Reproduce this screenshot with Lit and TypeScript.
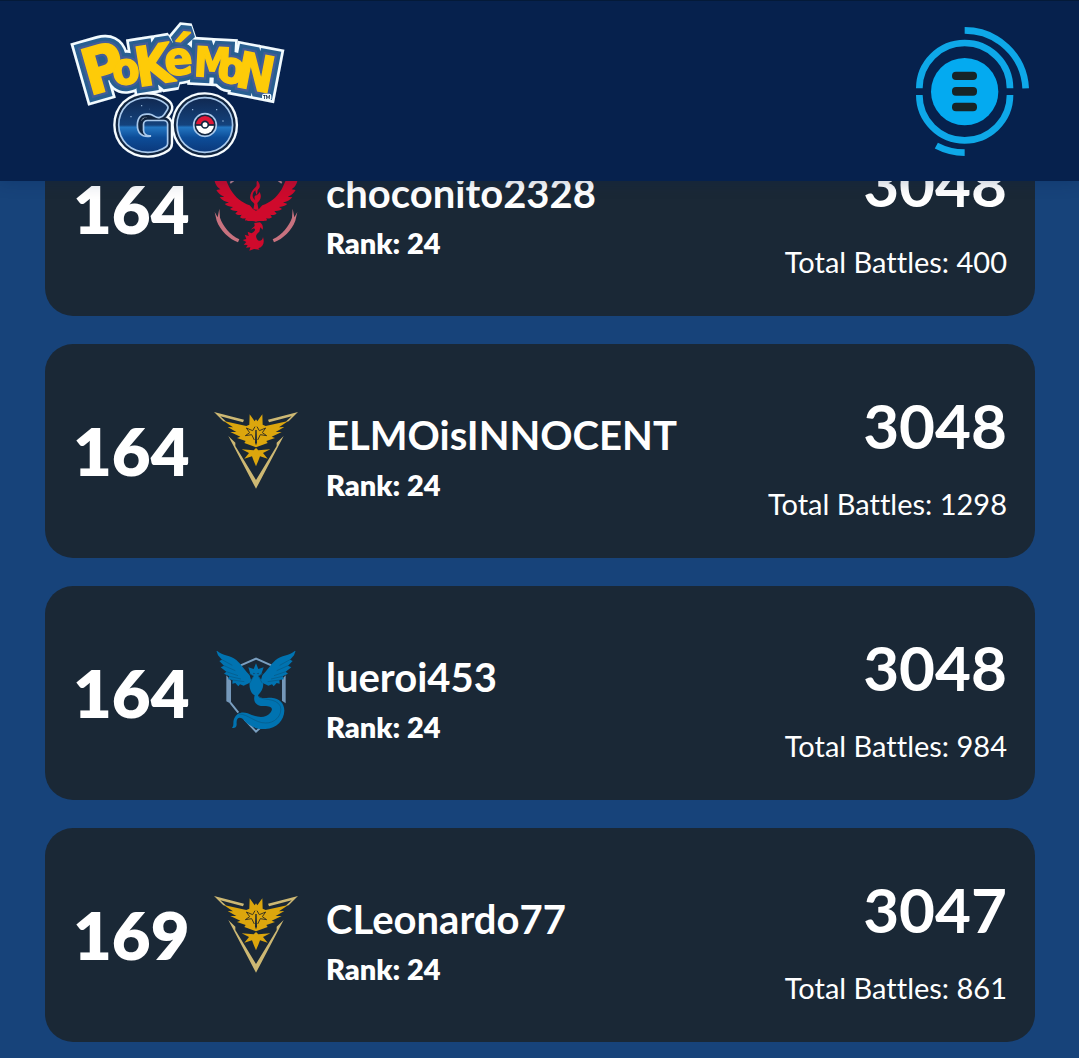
import { LitElement, html, svg, css } from "lit";
import { customElement, property, state } from "lit/decorators.js";

type Team = "valor" | "instinct" | "mystic";

interface Entry {
  place: number;
  team: Team;
  name: string;
  rank: number;
  score: number;
  battles: number;
}

const ENTRIES: Entry[] = [
  { place: 164, team: "valor", name: "choconito2328", rank: 24, score: 3048, battles: 400 },
  { place: 164, team: "instinct", name: "ELMOisINNOCENT", rank: 24, score: 3048, battles: 1298 },
  { place: 164, team: "mystic", name: "lueroi453", rank: 24, score: 3048, battles: 984 },
  { place: 169, team: "instinct", name: "CLeonardo77", rank: 24, score: 3047, battles: 861 },
];

/* One half of each emblem is drawn and mirrored about x = 153. */
const mirror = "translate(306 0) scale(-1 1)";

const valorHalf = svg`
  <path fill="#cf0a2c" d="M27 -6 C32 10 38 20 46 32 L28 30 C32 46 38 52 46 58 L34 60 C40 70 46 76 58 80 L44 82 C52 91 60 96 72 97 L59 102 C68 109 76 111 84 111 L75 117 C84 123 92 123 98 123 L91 131 C98 136 104 135 110 134 L105 142 C112 147 118 146 122 144 L120 151 C128 155 140 151 153 155 L153 122 C144 120 140 112 134 106 C110 98 92 84 76 58 C64 34 58 20 54 -2 Z"/>
  <path fill="#c8727f" d="M43 116 L45 143 C54 168 74 194 103 208 L99 217 C72 206 46 182 35 152 L29 126 L38 142 Z"/>
  <path fill="#b9818e" d="M74 36 L84 29 L88 33 L77 41 Z"/>`;

const instinctHalf = svg`
  <path fill="#cdb873" d="M27 36 L117 59 L114 67 L46 49 L64 65 L55 64 Z M70 108 L91 128 L91 138 L153 240 L153 266 Z"/>
  <path fill="#dca60d" d="M56 63 L124 78 L133 74 L134 43 L149 64 L153 58 L153 142 L118 129 L122 123 L96 114 L106 110 L76 96 L94 96 L68 81 L84 82 Z M153 144 L146 151 L110 148 L132 159 L118 176 L141 169 L146 182 L153 199 Z"/>
  <path fill="none" stroke="#3c3520" stroke-width="3" d="M150 80 L143 92 L124 84 L134 98 L121 107 L140 104 L148 120"/>`;

const mysticWing = svg`
  <path fill="#0073b1" d="M33 29 C48 48 76 44 94 60 C111 75 119 91 134 106 L140 127 C129 130 124 134 116 137 L105 133 L100 139 L91 129 L82 131 L83 120 L69 118 L73 109 L57 101 L64 95 L47 82 L57 77 L43 63 L51 59 L39 46 Z"/>
  <path fill="none" stroke="#085783" stroke-width="2" d="M51 59 L82 76 M57 77 L91 92 M64 95 L99 107 M73 109 L108 117 M83 120 L118 125"/>`;

const emblems = {
  valor: svg`
    <svg class="emblem" viewBox="27 -9 252 252" role="img" aria-label="Team Valor">
      ${valorHalf}<g transform=${mirror}>${valorHalf}</g>
      <path fill="#cf0a2c" d="M157 31 C151 42 160 45 149 54 C140 63 133 76 136 87 C138 95 146 96 148 102 L145 118 L161 120 L157 99 C166 91 172 78 163 66 C160 73 158 75 154 75 C160 67 155 64 160 58 C168 49 164 41 157 31 Z"/>
      <path fill="#1a2836" d="M151 61 C141 70 141 80 147 87 L151 91 C146 81 149 74 156 76 C152 71 152 65 151 61 Z"/>
      <path fill="#cf0a2c" d="M148 159 L165 157 C173 164 175 170 173 179 L166 172 L163 185 C151 194 151 201 158 210 C165 216 173 211 174 201 C179 217 176 230 160 235 L164 239 L147 237 L133 242 L136 232 L123 233 L128 225 L116 224 L124 216 L113 210 L124 207 L119 194 L131 198 L128 185 L139 190 C149 185 154 179 147 175 L137 179 L149 168 Z"/>
    </svg>`,
  instinct: svg`
    <svg class="emblem" viewBox="27 27 252 252" role="img" aria-label="Team Instinct">
      ${instinctHalf}<g transform=${mirror}>${instinctHalf}</g>
      <path fill="#1a2836" d="M151 90 L155 90 L156 128 L153 136 L150 128 Z"/>
    </svg>`,
  mystic: svg`
    <svg class="emblem" viewBox="27 33 252 252" role="img" aria-label="Team Mystic">
      <path fill="none" stroke="#7a9fc0" stroke-width="6" d="M107 76 L153 56 L199 76 M76 188 L100 218 M118 237 L153 275 L169 260"/>
      <path fill="#7598ba" d="M64 106 L78 122 L78 191 L64 184 Z M242 106 L231 118 L231 182 L242 190 Z"/>
      ${mysticWing}<g transform=${mirror}>${mysticWing}</g>
      <path fill="#0073b1" d="M130 82 L146 87 L153 70 L160 87 L176 82 L169 102 L160 108 L174 127 C177 141 170 155 159 166 C162 178 174 173 199 173 C224 175 238 190 238 212 C237 241 216 264 181 267 C151 269 130 256 117 241 C103 226 93 236 95 251 C96 263 86 266 81 263 C88 257 83 248 87 237 C95 218 111 214 128 220 C153 231 179 238 196 218 C209 202 193 197 174 198 C151 198 144 181 149 166 C136 158 132 141 134 127 L146 108 L136 102 Z"/>
      <path fill="none" stroke="#085783" stroke-width="2" d="M133 101 L146 108 L134 130 M173 101 L160 108 L172 130 M162 169 C170 183 211 171 226 198 C234 228 207 250 182 249 C150 249 129 222 102 222"/>
      <path fill="#123f63" d="M144 98 L151 101 L146 103 Z M162 98 L155 101 L160 103 Z"/>
    </svg>`,
};

/* Wordmark letters: character, x, baseline, size, tilt in degrees. */
const LETTERS: [string, number, number, number, number][] = [
  ["P", 88, 243, 192, -16],
  ["K", 234, 216, 164, -9],
  ["´", 309, 180, 170, 6],
  ["e", 316, 182, 140, -4],
  ["M", 400, 183, 124, 3],
  ["N", 522, 214, 150, 11],
  ["o", 162, 213, 134, -8],
  ["o", 468, 198, 134, 8],
];

const wordmark = (layer: string) =>
  LETTERS.map(
    ([ch, x, y, size, tilt]) =>
      svg`<text class=${layer} font-size=${size} transform="translate(${x} ${y}) rotate(${tilt})">${ch}</text>`,
  );

const go = (layer: string) => svg`
  <text class=${layer} font-size="190" x="182" y="400">G</text>
  <text class=${layer} font-size="190" x="357" y="400">O</text>`;

@customElement("game-logo")
class GameLogo extends LitElement {
  static styles = css`
    :host { display: block; }
    .logo { display: block; width: 230px; height: 155px; overflow: visible; }
    text { font-family: Lato, sans-serif; font-weight: 800; stroke-linejoin: round; }
    .word-edge, .word-rim, .word-shade, .word-face {
      font-family: "Liberation Sans Narrow", "DejaVu Sans Condensed", sans-serif;
      font-weight: 700;
      stroke-linejoin: miter;
      stroke-miterlimit: 2;
    }
    .word-edge { fill: #f2fbff; stroke: #f2fbff; stroke-width: 54px; }
    .word-rim { fill: #285f91; stroke: #285f91; stroke-width: 38px; }
    .word-shade { fill: #435d98; stroke: #435d98; stroke-width: 18px; }
    .word-face { fill: #fecb08; stroke: #fecb08; stroke-width: 4px; }
    .go-edge { fill: #f6fcff; stroke: #f6fcff; stroke-width: 56px; }
    .go-dark { fill: #10243f; stroke: #10243f; stroke-width: 42px; }
    .go-line { fill: #a9c9ec; stroke: #a9c9ec; stroke-width: 28px; }
    .go-face { fill: url(#night); stroke: url(#night); stroke-width: 18px; }
    .mark { font-size: 14px; fill: #10243f; }
  `;

  render() {
    return html`
      <svg class="logo" viewBox="0 0 690 465" role="img" aria-label="Pokémon GO">
        <defs>
          <linearGradient id="night" gradientUnits="userSpaceOnUse" x1="0" y1="245" x2="0" y2="415">
            <stop offset="0" stop-color="#102850" />
            <stop offset="0.5" stop-color="#14427c" />
            <stop offset="0.54" stop-color="#2376c2" />
            <stop offset="0.72" stop-color="#0d4d98" />
            <stop offset="1" stop-color="#0b3779" />
          </linearGradient>
        </defs>
        ${wordmark("word-edge")}
        ${go("go-edge")} ${go("go-dark")} ${go("go-line")} ${go("go-face")}
        <g fill="#a9c9ec">
          <circle cx="245" cy="272" r="2" /><circle cx="268" cy="282" r="1" />
          <circle cx="213" cy="305" r="2" /><circle cx="398" cy="284" r="2" />
          <circle cx="470" cy="284" r="2" /><circle cx="489" cy="318" r="2" />
        </g>
        <circle cx="435" cy="330" r="34" fill="#10243f" stroke="#a9c9ec" stroke-width="5" />
        <path fill="#df1737" d="M408 330 A27 27 0 0 1 462 330 Z" />
        <path fill="#fff" d="M408 330 A27 27 0 0 0 462 330 Z" />
        <path stroke="#10243f" stroke-width="5" d="M408 330 H462" />
        <circle cx="435" cy="329" r="10" fill="#fff" stroke="#10243f" stroke-width="5" />
        ${wordmark("word-rim")} ${wordmark("word-shade")} ${wordmark("word-face")}
        <rect x="606" y="236" width="28" height="20" rx="6" fill="#f2fbff" />
        <text class="mark" x="609" y="251">TM</text>
      </svg>
    `;
  }
}

@customElement("menu-button")
class MenuButton extends LitElement {
  static styles = css`
    :host { display: block; }
    .menu { display: block; padding: 0; border: 0; background: none; cursor: pointer; }
    .icon { display: block; width: 135px; height: 150px; }
  `;

  @state() private open = false;

  render() {
    return html`
      <button
        class="menu"
        type="button"
        aria-label="Menu"
        aria-expanded=${this.open ? "true" : "false"}
        @click=${() => (this.open = !this.open)}
      >
        <svg class="icon" viewBox="0 0 405 450" aria-hidden="true">
          <circle cx="179" cy="230" r="101" fill="#04aaf0" />
          <g fill="none" stroke="#0ea8e8" stroke-width="20">
            <path d="M43 220 A136 136 0 0 1 315 220" />
            <path d="M43 240 A136 136 0 0 0 315 240" />
            <path d="M179 46 A183 183 0 0 1 362 220" />
            <path d="M94 392 A183 183 0 0 0 179 413" />
          </g>
          <g fill="#172427">
            <rect x="141" y="170" width="75" height="25" rx="12" />
            <rect x="141" y="216" width="75" height="26" rx="12" />
            <rect x="141" y="263" width="75" height="26" rx="12" />
          </g>
        </svg>
      </button>
    `;
  }
}

@customElement("player-card")
class PlayerCard extends LitElement {
  static styles = css`
    :host { display: block; }
    .card {
      display: grid;
      grid-template-columns: 113px 84px 1fr auto;
      column-gap: 28px;
      align-items: center;
      padding: 19px 28px;
      border-radius: 28px;
      background: #1a2836;
      color: #fff;
      font-variant-ligatures: none;
    }
    .place { padding-bottom: 2px; font-size: 67px; font-weight: 800; line-height: 80px; }
    .emblem { display: block; width: 84px; height: 84px; }
    .player { padding-top: 16px; }
    .name { margin: 0; font-size: 40px; font-weight: 700; line-height: 52px; }
    .rank { margin: 0; font-size: 29px; font-weight: 800; line-height: 48px; }
    .result { padding-top: 18px; text-align: right; }
    .score { margin: 0; font-size: 62px; font-weight: 700; line-height: 88px; }
    .battles { margin: 0; font-size: 29px; line-height: 70px; }
  `;

  @property({ attribute: false }) entry!: Entry;

  render() {
    const e = this.entry;
    return html`
      <article class="card">
        <div class="place">${e.place}</div>
        ${emblems[e.team]}
        <div class="player">
          <h2 class="name">${e.name}</h2>
          <p class="rank">Rank: ${e.rank}</p>
        </div>
        <div class="result">
          <p class="score">${e.score}</p>
          <p class="battles">Total Battles: ${e.battles}</p>
        </div>
      </article>
    `;
  }
}

@customElement("app-root")
class AppRoot extends LitElement {
  static styles = css`
    :host {
      display: block;
      min-height: 100vh;
      background: #17437a;
      font-family: Lato, "Open Sans", sans-serif;
    }
    .bar {
      position: fixed;
      top: 0;
      left: 0;
      right: 0;
      z-index: 1;
      display: flex;
      justify-content: space-between;
      align-items: flex-start;
      box-sizing: border-box;
      height: 181px;
      padding: 14px 39px 0 60px;
      border-top: 1px solid #041a38;
      background: #06214d;
      box-shadow: 0 0 16px rgba(5, 33, 79, 0.3);
    }
    .list {
      display: flex;
      flex-direction: column;
      gap: 28px;
      margin: 0;
      padding: 102px 44px 16px 45px;
      list-style: none;
    }
  `;

  render() {
    return html`
      <header class="bar">
        <game-logo></game-logo>
        <menu-button></menu-button>
      </header>
      <main>
        <ol class="list">
          ${ENTRIES.map((entry) => html`<li><player-card .entry=${entry}></player-card></li>`)}
        </ol>
      </main>
    `;
  }
}
